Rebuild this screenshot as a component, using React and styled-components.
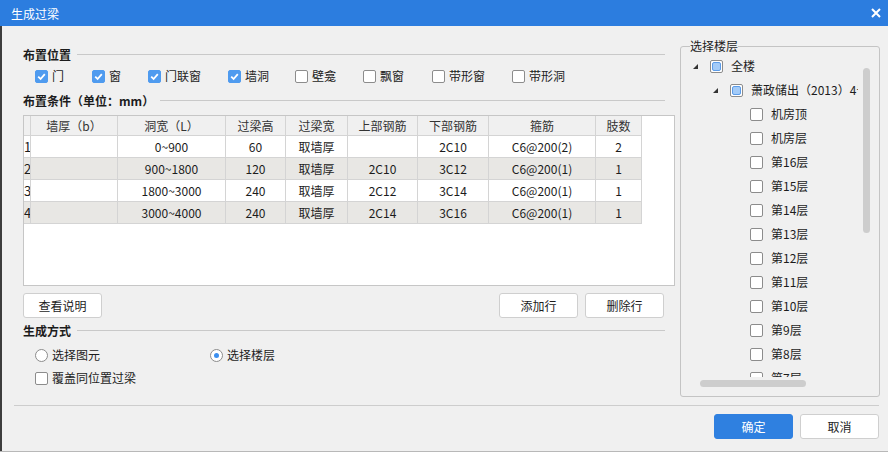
import React from 'react'
import styled, { createGlobalStyle, css } from 'styled-components'

const GlobalStyle = createGlobalStyle`
  * { box-sizing: border-box; }
  html, body {
    margin: 0;
    padding: 0;
    background: #f0f0f0;
    font-family: "Noto Sans CJK SC", "Microsoft YaHei", sans-serif;
    font-size: 12px;
    color: #1c1c1c;
  }
`

const Window = styled.div`
  width: 888px;
  height: 452px;
  display: flex;
  flex-direction: column;
  border-bottom: 1px solid #b8b8b8;
  background: #f0f0f0;
`

const TitleBar = styled.div`
  height: 26px;
  flex: none;
  background: #2c7ddf;
  color: #fff;
  display: flex;
  align-items: center;
  justify-content: space-between;
  padding: 0 6px 0 11px;
  font-size: 12px;
`

const Main = styled.div`
  flex: 1;
  display: flex;
  flex-direction: column;
  border-left: 2px solid #3d3d3d;
`

const Body = styled.div`
  height: 379px;
  display: flex;
  gap: 15px;
  padding-left: 21px;
`

const LeftCol = styled.div`
  width: 642px;
  padding-top: 21px;
  display: flex;
  flex-direction: column;
`

const Heading = styled.div`
  display: flex;
  align-items: center;
  gap: 6px;
  height: 16px;
  line-height: 16px;
  font-weight: bold;
  margin-top: ${p => p.$mt || 0}px;
  &::after {
    content: '';
    flex: 1;
    height: 1px;
    background: #c9c9c9;
    margin-top: -1px;
  }
`

const OptionRow = styled.div`
  display: flex;
  align-items: center;
  height: 16px;
  padding-left: 12px;
  margin-top: ${p => p.$mt || 0}px;
`

const Option = styled.label`
  display: flex;
  align-items: center;
  gap: 4px;
  width: ${p => (p.$w ? p.$w + 'px' : 'auto')};
  line-height: 16px;
  white-space: nowrap;
`

const Box = styled.span`
  width: 13px;
  height: 13px;
  flex: none;
  border-radius: 2px;
  display: inline-flex;
  align-items: center;
  justify-content: center;
  ${p =>
    p.$checked
      ? css`
          background: #4f9bef;
          border: 1px solid #4f9bef;
        `
      : css`
          background: #fff;
          border: 1px solid #8c8c8c;
        `}
`

const PartialFill = styled.span`
  width: 9px;
  height: 9px;
  border-radius: 2px;
  background: #a3cbf8;
  border: 1px solid #5c9ce8;
`

const Radio = styled.span`
  width: 13px;
  height: 13px;
  flex: none;
  border-radius: 50%;
  background: #fff;
  border: 1px solid #8c8c8c;
  display: inline-flex;
  align-items: center;
  justify-content: center;
  &::after {
    content: '';
    width: 5px;
    height: 5px;
    border-radius: 50%;
    background: ${p => (p.$checked ? '#3b8ff0' : 'transparent')};
  }
`

const TableBox = styled.div`
  margin-top: 6px;
  width: 652px;
  height: 171px;
  border: 1px solid #c6c6c6;
  background: #fff;
`

const Grid = styled.div`
  display: grid;
  grid-template-columns: 7px 87px 108px 60px 62px 70px 71px 107px 46px;
  width: 618px;
`

const Cell = styled.div`
  height: ${p => (p.$head ? 20 : 22)}px;
  border-right: 1px solid #d4d4d4;
  border-bottom: 1px solid #d4d4d4;
  display: flex;
  align-items: center;
  justify-content: ${p => (p.$num ? 'flex-start' : 'center')};
  overflow: hidden;
  white-space: nowrap;
  font-size: ${p => (p.$num ? 13 : 12)}px;
  color: ${p => (p.$head ? '#333' : '#1c1c1c')};
  background: ${p => (p.$head ? '#f0f0f0' : p.$alt ? '#e8e7e4' : '#fff')};
`

const ButtonRow = styled.div`
  display: flex;
  justify-content: space-between;
  margin-top: 7px;
  padding-right: 1px;
`

const ButtonGroup = styled.div`
  display: flex;
  gap: 7px;
`

const Button = styled.button`
  width: 79px;
  height: 25px;
  padding: 0;
  border-radius: 3px;
  font-family: inherit;
  font-size: 12px;
  cursor: pointer;
  ${p =>
    p.$primary
      ? css`
          background: #2f80e0;
          border: 1px solid #2f80e0;
          color: #fff;
        `
      : css`
          background: #fff;
          border: 1px solid #cfcfcf;
          color: #1c1c1c;
        `}
`

const RightCol = styled.fieldset`
  width: 200px;
  height: 359px;
  margin: 12px 0 0 0;
  padding: 0;
  min-width: 0;
  border: 1px solid #c4c4c4;
  border-radius: 3px;
`

const Legend = styled.legend`
  margin-left: 9px;
  padding: 0;
  line-height: 16px;
  font-size: 12px;
  color: #1c1c1c;
`

const TreePanel = styled.div`
  position: relative;
  height: 342px;
`

const Viewport = styled.div`
  width: 177px;
  height: 323px;
  overflow: hidden;
`

const TreeRow = styled.div`
  height: 24px;
  display: flex;
  align-items: center;
  padding-left: ${p => 12 + p.$level * 20}px;
  white-space: nowrap;
`

const Toggle = styled.span`
  width: 17px;
  flex: none;
  display: inline-flex;
  align-items: center;
`

const TreeLabel = styled.span`
  margin-left: 8px;
  line-height: 16px;
`

const Thumb = styled.div`
  position: absolute;
  background: #cdcdcd;
  border-radius: 4px;
  ${p =>
    p.$vertical
      ? css`
          left: 182px;
          top: 14px;
          width: 7px;
          height: 165px;
        `
      : css`
          left: 19px;
          top: 326px;
          width: 106px;
          height: 7px;
        `}
`

const Divider = styled.div`
  height: 1px;
  background: #cdcdcd;
  margin: 0 9px 0 12px;
`

const Footer = styled.div`
  display: flex;
  justify-content: flex-end;
  gap: 7px;
  padding: 8px 9px 0 0;
`

const Check = ({ checked }) => (
  <Box $checked={checked}>
    {checked && (
      <svg width="11" height="11" viewBox="0 0 11 11">
        <polyline points="2.2,5.6 4.6,8 8.8,3.2" fill="none" stroke="#fff" strokeWidth="1.8" />
      </svg>
    )}
  </Box>
)

const positions = [
  { label: '门', w: 57, checked: true },
  { label: '窗', w: 56, checked: true },
  { label: '门联窗', w: 80, checked: true },
  { label: '墙洞', w: 67, checked: true },
  { label: '壁龛', w: 68 },
  { label: '飘窗', w: 69 },
  { label: '带形窗', w: 80 },
  { label: '带形洞' },
]

const headers = ['', '墙厚（b）', '洞宽（L）', '过梁高', '过梁宽', '上部钢筋', '下部钢筋', '箍筋', '肢数']

const rows = [
  ['1', '', '0~900', '60', '取墙厚', '', '2C10', 'C6@200(2)', '2'],
  ['2', '', '900~1800', '120', '取墙厚', '2C10', '3C12', 'C6@200(1)', '1'],
  ['3', '', '1800~3000', '240', '取墙厚', '2C12', '3C14', 'C6@200(1)', '1'],
  ['4', '', '3000~4000', '240', '取墙厚', '2C14', '3C16', 'C6@200(1)', '1'],
]

// 第7层 only peeks in at the bottom edge, as in the scrolled list
const floors = ['机房顶', '机房层', '第16层', '第15层', '第14层', '第13层', '第12层', '第11层', '第10层', '第9层', '第8层', '第7层']

const Arrow = () => (
  <svg width="5" height="5" viewBox="0 0 5 5">
    <polygon points="5,0 5,5 0,5" fill="#333" />
  </svg>
)

export default function App() {
  return (
    <>
      <GlobalStyle />
      <Window>
        <TitleBar>
          <span>生成过梁</span>
          <svg width="12" height="12" viewBox="0 0 12 12">
            <path d="M2 2 L10 10 M10 2 L2 10" stroke="#fff" strokeWidth="2" />
          </svg>
        </TitleBar>
        <Main>
          <Body>
            <LeftCol>
              <Heading>布置位置</Heading>
              <OptionRow $mt={5}>
                {positions.map(p => (
                  <Option key={p.label} $w={p.w}>
                    <Check checked={p.checked} />
                    {p.label}
                  </Option>
                ))}
              </OptionRow>
              <Heading $mt={9}>布置条件（单位：mm）</Heading>
              <TableBox>
                <Grid>
                  {headers.map((h, i) => (
                    <Cell key={'h' + i} $head>{h}</Cell>
                  ))}
                  {rows.map((r, ri) =>
                    r.map((c, ci) => (
                      <Cell key={ri + '-' + ci} $alt={ri % 2 === 1} $num={ci === 0}>
                        {c}
                      </Cell>
                    ))
                  )}
                </Grid>
              </TableBox>
              <ButtonRow>
                <Button>查看说明</Button>
                <ButtonGroup>
                  <Button>添加行</Button>
                  <Button>删除行</Button>
                </ButtonGroup>
              </ButtonRow>
              <Heading $mt={5}>生成方式</Heading>
              <OptionRow $mt={8}>
                <Option $w={175}>
                  <Radio />
                  选择图元
                </Option>
                <Option>
                  <Radio $checked />
                  选择楼层
                </Option>
              </OptionRow>
              <OptionRow $mt={7}>
                <Option>
                  <Check />
                  覆盖同位置过梁
                </Option>
              </OptionRow>
            </LeftCol>
            <RightCol>
              <Legend>选择楼层</Legend>
              <TreePanel>
                <Viewport>
                  <TreeRow $level={0}>
                    <Toggle><Arrow /></Toggle>
                    <Box><PartialFill /></Box>
                    <TreeLabel>全楼</TreeLabel>
                  </TreeRow>
                  <TreeRow $level={1}>
                    <Toggle><Arrow /></Toggle>
                    <Box><PartialFill /></Box>
                    <TreeLabel>萧政储出（2013）4号楼</TreeLabel>
                  </TreeRow>
                  {floors.map(f => (
                    <TreeRow key={f} $level={2}>
                      <Toggle />
                      <Box />
                      <TreeLabel>{f}</TreeLabel>
                    </TreeRow>
                  ))}
                </Viewport>
                <Thumb $vertical />
                <Thumb />
              </TreePanel>
            </RightCol>
          </Body>
          <Divider />
          <Footer>
            <Button $primary>确定</Button>
            <Button>取消</Button>
          </Footer>
        </Main>
      </Window>
    </>
  )
}
